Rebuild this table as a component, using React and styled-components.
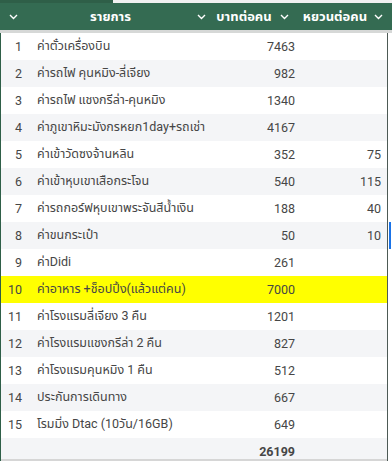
import React from 'react';
import styled, {createGlobalStyle} from 'styled-components';

const GlobalStyle = createGlobalStyle`
    body {
        margin: 0;
        background: #ffffff;
        font-family: Roboto, "Noto Sans", "Noto Sans Thai", sans-serif;
    }
`;

const rows = [
    {name: 'ค่าตั๋วเครื่องบิน', baht: 7463},
    {name: 'ค่ารถไฟ คุนหมิง-ลี่เจียง', baht: 982},
    {name: 'ค่ารถไฟ แชงกรีล่า-คุนหมิง', baht: 1340},
    {name: 'ค่าภูเขาหิมะมังกรหยก1day+รถเช่า', baht: 4167},
    {name: 'ค่าเข้าวัดซงจ้านหลิน', baht: 352, yuan: 75},
    {name: 'ค่าเข้าหุบเขาเสือกระโจน', baht: 540, yuan: 115},
    {name: 'ค่ารถกอร์ฟหุบเขาพระจันสีน้ำเงิน', baht: 188, yuan: 40},
    {name: 'ค่าขนกระเป๋า', baht: 50, yuan: 10, selected: true},
    {name: 'ค่าDidi', baht: 261},
    {name: 'ค่าอาหาร +ช็อปปิ้ง(แล้วแต่คน)', baht: 7000, highlight: true},
    {name: 'ค่าโรงแรมลี่เจียง 3 คืน', baht: 1201},
    {name: 'ค่าโรงแรมแชงกรีล่า 2 คืน', baht: 827},
    {name: 'ค่าโรงแรมคุนหมิง 1 คืน', baht: 512},
    {name: 'ประกันการเดินทาง', baht: 667},
    {name: 'โรมมิ่ง Dtac (10วัน/16GB)', baht: 649},
];

const Chevron = () => (
    <svg width="9" height="6" viewBox="0 0 9 6">
        <polyline points="1,1 4.5,4.5 8,1" fill="none" stroke="#ffffff" strokeWidth="1.4" />
    </svg>
);

const Page = styled.div`
    width: 392px;
    height: 461px;
    overflow: hidden;
    display: flex;
    flex-direction: column;
`;

const TopStrip = styled.div`
    height: 3px;
    flex-shrink: 0;
    background: linear-gradient(to right, #2f5f48 0 113px, #f1f1f1 113px);
`;

const Header = styled.div`
    display: grid;
    grid-template-columns: 27px 184px 88px 93px;
    height: 27px;
    flex-shrink: 0;
    background: #346b52;
    color: #ffffff;
    font-weight: 700;
    font-size: 13px;
    border-bottom: 3px solid #d6d8d7;
`;

const HeadCell = styled.div`
    display: flex;
    align-items: center;
    justify-content: ${p => (p.$empty ? 'center' : 'flex-start')};
    padding-right: ${p => (p.$empty ? '0' : p.$pad)};
    gap: 3px;
    span {
        flex: 1;
        text-align: center;
        white-space: nowrap;
    }
    svg {
        flex-shrink: 0;
    }
`;

const Body = styled.div`
    width: 388px;
    flex-shrink: 0;
    border-left: 1px solid #2f5f48;
    border-right: 1px solid #4d5a55;
    box-sizing: border-box;
`;

const Row = styled.div`
    display: grid;
    grid-template-columns: 26px 184px 88px 88px;
    height: ${p => (p.$total ? '21px' : '27px')};
    align-items: ${p => (p.$total ? 'end' : 'center')};
    font-size: 12.5px;
    color: #464646;
    background: ${p => (p.$highlight ? '#ffff00' : p.$even ? '#f4f5f7' : '#ffffff')};
    position: relative;
    font-weight: ${p => (p.$total ? 700 : 400)};
    border-bottom: ${p => (p.$total ? '2px solid #d6d6d6' : 'none')};
`;

const Num = styled.div`
    text-align: right;
    padding-right: ${p => p.$pad};
    white-space: nowrap;
`;

const Name = styled.div`
    padding-left: 10px;
    white-space: nowrap;
    overflow: hidden;
`;

const SelectMark = styled.div`
    position: absolute;
    right: -4px;
    top: 0;
    bottom: 0;
    width: 2px;
    background: #1a73e8;
`;

const App = () => {
    const total = rows.reduce((s, r) => s + r.baht, 0);
    return (
        <>
            <GlobalStyle />
            <Page>
                <TopStrip />
                <Header>
                    <HeadCell $empty><Chevron /></HeadCell>
                    <HeadCell $pad="5px"><span>รายการ</span><Chevron /></HeadCell>
                    <HeadCell $pad="10px"><span>บาทต่อคน</span><Chevron /></HeadCell>
                    <HeadCell $pad="9px"><span>หยวนต่อคน</span><Chevron /></HeadCell>
                </Header>
                <Body>
                    {rows.map((r, i) => (
                        <Row key={i} $even={i % 2 === 1} $highlight={r.highlight}>
                            <Num $pad="5px">{i + 1}</Num>
                            <Name>{r.name}</Name>
                            <Num $pad="4px">{r.baht}</Num>
                            <Num $pad="6px">{r.yuan}</Num>
                            {r.selected && <SelectMark />}
                        </Row>
                    ))}
                    <Row $even $total>
                        <div />
                        <div />
                        <Num $pad="4px">{total}</Num>
                        <div />
                    </Row>
                </Body>
            </Page>
        </>
    );
};

export default App;
